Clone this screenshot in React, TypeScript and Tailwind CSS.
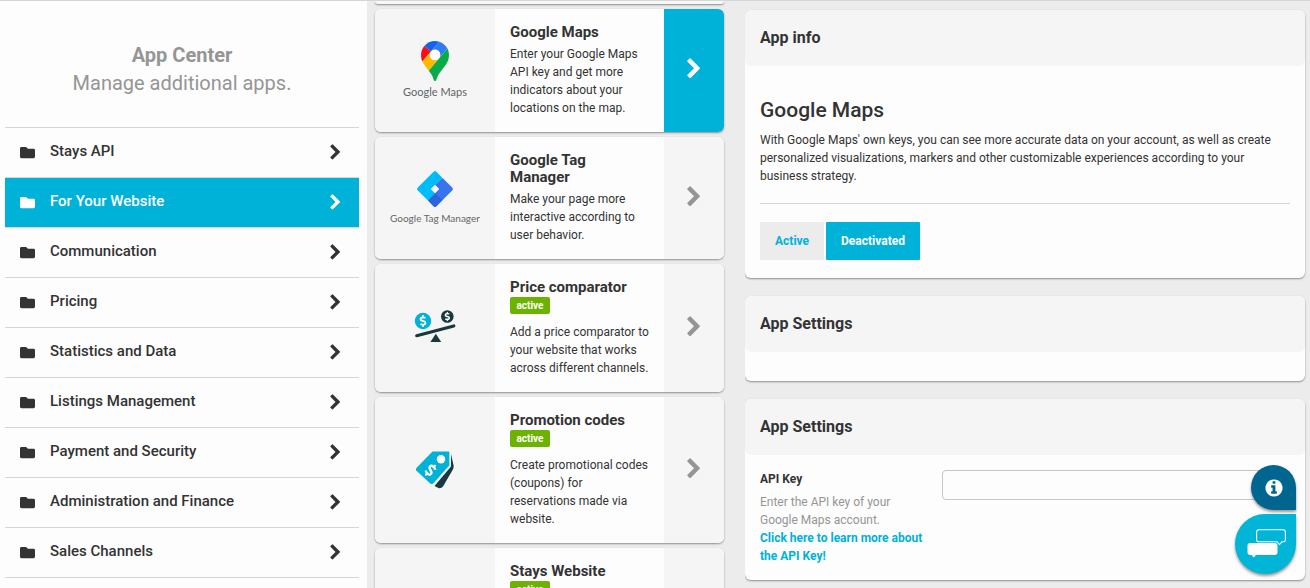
import React from "react";
import { FaDollarSign, FaFolder } from "react-icons/fa";

const categories = [
  "Stays API",
  "For Your Website",
  "Communication",
  "Pricing",
  "Statistics and Data",
  "Listings Management",
  "Payment and Security",
  "Administration and Finance",
  "Sales Channels",
];

function Chevron({ size }: { size: number }) {
  return (
    <svg width={size} height={size} viewBox="0 0 1792 1792" fill="currentColor" aria-hidden="true">
      <path d="M1363 877l-742 742q-19 19-45 19t-45-19l-166-166q-19-19-19-45t19-45l531-531-531-531q-19-19-19-45t19-45l166-166q19-19 45-19t45 19l742 742q19 19 19 45t-19 45z" />
    </svg>
  );
}

function InfoIcon() {
  return (
    <svg width="20" height="20" viewBox="0 0 1792 1792" fill="currentColor" aria-hidden="true">
      <path d="M1152 1376v-160q0-14-9-23t-23-9h-96v-512q0-14-9-23t-23-9h-320q-14 0-23 9t-9 23v160q0 14 9 23t23 9h96v320h-96q-14 0-23 9t-9 23v160q0 14 9 23t23 9h448q14 0 23-9t9-23zm-128-896v-160q0-14-9-23t-23-9h-192q-14 0-23 9t-9 23v160q0 14 9 23t23 9h192q14 0 23-9t9-23zm640 416q0 209-103 385.500t-279.500 279.500-385.500 103-385.500-103-279.500-279.500-103-385.500 103-385.500 279.500-279.500 385.500-103 385.500 103 279.500 279.500 103 385.500z" />
    </svg>
  );
}

function MapsLogo() {
  return (
    <div className="flex flex-col items-center gap-[3px]">
      <svg width="28" height="40" viewBox="0 0 92.3 132.3" aria-hidden="true">
        <circle cx="46.2" cy="46.2" r="20" fill="#fff" />
        <path fill="#1265e8" d="M60.2 2.2C55.8.8 51 0 46.1 0 32 0 19.3 6.4 10.8 16.5l21.8 18.3L60.2 2.2z" />
        <path fill="#fb0d1b" d="M10.8 16.5C4.1 24.5 0 34.9 0 46.1c0 8.7 1.7 15.7 4.6 22l28-33.3-21.8-18.3z" />
        <path fill="#2f7bf6" d="M46.2 28.5c9.8 0 17.7 7.9 17.7 17.7 0 4.3-1.6 8.3-4.2 11.4 0 0 13.9-16.6 27.5-32.7-5.6-10.8-15.3-19-27-22.7L32.6 34.8c3.3-3.8 8.1-6.3 13.6-6.3" />
        <path fill="#ffb800" d="M46.2 63.8c-9.8 0-17.7-7.9-17.7-17.7 0-4.3 1.5-8.3 4.1-11.3l-28 33.3c4.8 10.6 12.8 19.2 21 29.9l34.1-40.5c-3.3 3.9-8.1 6.3-13.5 6.3" />
        <path fill="#07ab47" d="M59.1 109.2c15.4-24.1 33.3-35 33.3-63 0-7.7-1.9-14.9-5.2-21.3L25.6 98c2.6 3.4 5.3 7.3 7.9 11.3 9.4 14.5 6.8 23.1 12.8 23.1s3.4-8.7 12.8-23.2" />
      </svg>
      <span className="font-['Lato',sans-serif] text-[11px] leading-4 text-[#5f6368]">Google Maps</span>
    </div>
  );
}

function TagManagerLogo() {
  return (
    <div className="flex flex-col items-center gap-1">
      <svg width="36" height="36" viewBox="0 0 36 36" aria-hidden="true">
        <path fill="#00bcf8" d="M16.6.8a2 2 0 0 1 2.8 0L25.5 7 14 18l4.5 4.5L11 29.500.8 19.400a2 2 0 0 1 0-2.800z" />
        <path fill="#3674f2" d="M25.500 7l9.700 9.600a2 2 0 0 1 0 2.800L19.400 35.200a2 2 0 0 1-2.800 0L11 29.500 22 18l-4-4z" />
        <path fill="#2c62dc" d="M11 29.500l7.500-7 7 6.500-6.100 6.200a2 2 0 0 1-2.800 0z" />
        <path fill="#fff" d="M18 14l4 4-4 4-4-4z" />
      </svg>
      <span className="whitespace-nowrap font-['Lato',sans-serif] text-[10px] leading-[14px] text-[#666]">
        Google Tag Manager
      </span>
    </div>
  );
}

function ComparatorIcon() {
  return (
    <svg width="42" height="38" viewBox="0 0 42 38" aria-hidden="true">
      <circle cx="9" cy="12" r="8.2" fill="#00b1d8" />
      <circle cx="33.300" cy="7.500" r="6.300" fill="#17393f" />
      <FaDollarSign x="3" y="6" size={12} color="#fff" />
      <FaDollarSign x="28.500" y="2.700" size={9.600} color="#fff" />
      <path d="M2.700 26.700L39.800 17" stroke="#17393f" strokeWidth="3.200" strokeLinecap="round" />
      <path d="M21.800 24.800l5.400 8.200H16.400z" fill="#17393f" />
    </svg>
  );
}

function CouponIcon() {
  return (
    <svg width="40" height="40" viewBox="0 0 40 40" aria-hidden="true">
      <path fill="#17393f" d="M36 4l2.600 11.500q.4 2.500-1 4.500L28 36.500q-1.500 2-4 1.800L19.500 36 36 16.500z" />
      <path fill="#00b1d8" d="M17.500 1.500h15.800q1.100 0 1.100 1.100v12.600L18.700 33q-1.600 1.700-3.500.4L1.200 20.500q-.8-1.300.2-2.600z" />
      <circle cx="26" cy="9.200" r="4.200" fill="#fff" />
      <g transform="rotate(45 15.500 20.200)">
        <FaDollarSign x="8" y="12.700" size={15} color="#fff" />
      </g>
    </svg>
  );
}

type AppItem = {
  title: string;
  text?: string;
  active?: boolean;
  selected?: boolean;
  logo?: React.ReactNode;
};

const apps: AppItem[] = [
  {
    title: "Google Maps",
    text: "Enter your Google Maps API key and get more indicators about your locations on the map.",
    selected: true,
    logo: <MapsLogo />,
  },
  {
    title: "Google Tag Manager",
    text: "Make your page more interactive according to user behavior.",
    logo: <TagManagerLogo />,
  },
  {
    title: "Price comparator",
    text: "Add a price comparator to your website that works across different channels.",
    active: true,
    logo: <ComparatorIcon />,
  },
  {
    title: "Promotion codes",
    text: "Create promotional codes (coupons) for reservations made via website.",
    active: true,
    logo: <CouponIcon />,
  },
  { title: "Stays Website", active: true },
];

function AppCard({ app }: { app: AppItem }) {
  return (
    <article className="grid min-h-[120px] shrink-0 grid-cols-[120px_minmax(0,1fr)_60px] overflow-hidden rounded-md bg-[#fdfdfd] shadow-[0_1px_2px_rgba(0,0,0,0.4)]">
      <div className="flex items-center justify-center bg-[#f5f5f5]">{app.logo}</div>
      <div className="p-[15px]">
        <h3 className="text-[15px] leading-[17px] font-bold">{app.title}</h3>
        {app.active && (
          <span className="mt-px mb-[9px] block w-10 rounded-xs bg-[#6bb300] text-center text-[10px] leading-[17px] font-bold text-white">
            active
          </span>
        )}
        {app.text && <p className="mt-1 text-[12px] leading-[18px]">{app.text}</p>}
      </div>
      <button
        type="button"
        aria-label={`Open ${app.title}`}
        className={
          app.selected
            ? "flex items-center justify-center bg-[#00b1d8] pb-[3px] text-white"
            : "flex items-center justify-center bg-[#f5f5f5] pb-[3px] text-[#959595]"
        }
      >
        <Chevron size={22} />
      </button>
    </article>
  );
}

function Panel({ title, children }: { title: string; children?: React.ReactNode }) {
  return (
    <section className="shrink-0 rounded-md bg-[#fdfdfd] shadow-[0_1px_2px_rgba(0,0,0,0.4)]">
      <h2 className="rounded-md bg-[#f5f5f5] px-[15px] py-4 text-[16px] leading-6 font-bold">{title}</h2>
      {children}
    </section>
  );
}

export default function App() {
  return (
    <div className="grid h-screen grid-cols-[367fr_378fr_565fr] overflow-hidden border-t border-[#d6d6d6] bg-[#ececec] font-['Roboto',sans-serif] text-[#333]">
      <aside className="bg-[#fdfdfd] pr-2 pl-[5px]">
        <header className="pt-10 pb-[30px] text-center text-[20px] leading-7 text-[#959595]">
          <h1 className="font-bold">App Center</h1>
          <p>Manage additional apps.</p>
        </header>
        <nav aria-label="App categories" className="border-b border-[#d6d6d6]">
          {categories.map((name) => (
            <a
              key={name}
              href="#"
              aria-current={name === "For Your Website" ? "page" : undefined}
              className={
                name === "For Your Website"
                  ? "flex h-[50px] items-center border-t border-[#d6d6d6] bg-[#00b1d8] px-[15px] pb-px text-white"
                  : "flex h-[50px] items-center border-t border-[#d6d6d6] px-[15px] pb-px"
              }
            >
              <FaFolder size={15} />
              <span className="grow pb-0.5 pl-[15px] text-[15px] leading-5 font-medium">{name}</span>
              <Chevron size={17} />
            </a>
          ))}
        </nav>
      </aside>

      <main className="flex flex-col gap-[5px] overflow-hidden pr-[21px] pl-2">
        <div className="h-[3px] shrink-0 rounded-b-md bg-[#f8f8f8] shadow-[0_1px_2px_rgba(0,0,0,0.4)]" />
        {apps.map((app) => (
          <AppCard key={app.title} app={app} />
        ))}
      </main>

      <div className="flex flex-col gap-[18px] overflow-hidden pt-[9px] pr-[5px]">
        <Panel title="App info">
          <div className="px-[15px] pt-[30px] pb-[18px]">
            <h2 className="text-[21px] leading-7 font-medium">Google Maps</h2>
            <p className="mt-[7px] text-[12px] leading-[18px]">
              With Google Maps' own keys, you can see more accurate data on your account, as well as create
              personalized visualizations, markers and other customizable experiences according to your business
              strategy.
            </p>
            <hr className="my-[18px] border-[#d6d6d6]" />
            <div className="flex gap-0.5 text-[12px] leading-[18px] font-bold">
              <button type="button" className="bg-[#ececec] px-[15px] py-2.5 text-[#00b1d8]">
                Active
              </button>
              <button type="button" className="rounded-[1px] bg-[#00b1d8] px-[15px] py-2.5 text-white">
                Deactivated
              </button>
            </div>
          </div>
        </Panel>
        <Panel title="App Settings">
          <div className="h-[29px]" />
        </Panel>
        <Panel title="App Settings">
          <div className="grid grid-cols-[167fr_348fr] gap-[15px] p-[15px] text-[12px] leading-[18px]">
            <div>
              <label htmlFor="api-key" className="mb-[5px] block font-bold">
                API Key
              </label>
              <p className="text-[#959595]">Enter the API key of your Google Maps account.</p>
              <a href="#" className="block font-bold text-[#00b1d8]">
                Click here to learn more about the API Key!
              </a>
            </div>
            <input
              id="api-key"
              type="text"
              className="h-[30px] w-full rounded-sm border border-[#c6c6c6] bg-[#fdfdfd] px-2"
            />
          </div>
        </Panel>
      </div>

      <div className="fixed right-[14px] bottom-[14px] flex flex-col items-end gap-1">
        <button
          type="button"
          aria-label="Information"
          className="flex size-[45px] items-center justify-center rounded-full rounded-br-md bg-[#00658f] text-white shadow-[0_2px_3px_rgba(0,0,0,0.4)]"
        >
          <InfoIcon />
        </button>
        <button
          type="button"
          aria-label="Chat"
          className="flex h-[60px] w-[61px] items-center justify-center rounded-full rounded-tr-md bg-[#00b5d6] shadow-[0_2px_3px_rgba(0,0,0,0.4)]"
        >
          <svg width="40" height="30" viewBox="0 0 40 30" fill="none" aria-hidden="true">
            <path
              d="M13 .8h24q2.400 0 2.400 2.400v7.200q0 2.400-2.400 2.400h-1l-2.500 2.700-2.500-2.700H13q-2.400 0-2.400-2.400V3.200Q10.600.8 13 .8z"
              stroke="#fff"
              strokeWidth="1.100"
            />
            <path
              d="M4.200 14h24.600q2.700 0 2.700 2.700v6.600q0 2.700-2.700 2.700H10l-2.200 2.500L5.600 26H4.200q-2.700 0-2.700-2.700v-6.600Q1.500 14 4.200 14z"
              fill="#fff"
            />
          </svg>
        </button>
      </div>
    </div>
  );
}
